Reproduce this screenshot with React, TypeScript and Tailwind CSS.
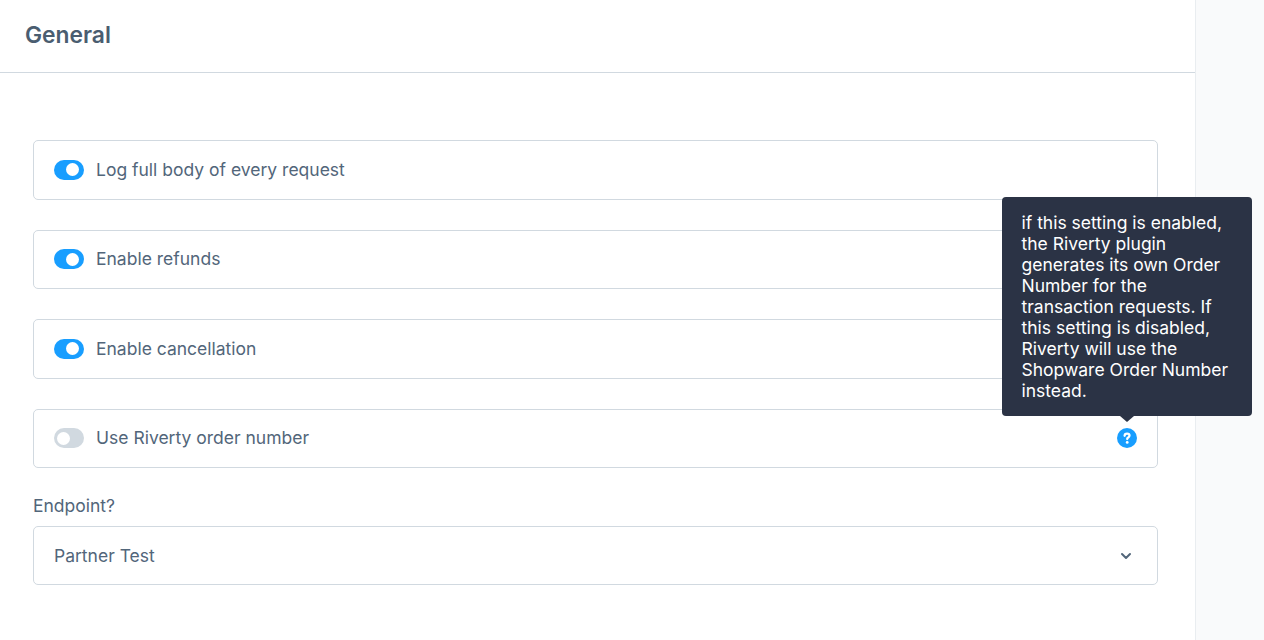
export default function App() {
  const Toggle = ({ on }: { on: boolean }) => (
    <span className={`flex h-5 w-[30px] shrink-0 items-center rounded-full ${on ? "justify-end bg-[#189eff] pr-[5px]" : "justify-start bg-[#d1d9e0] pl-[3px]"}`}>
      <span className="h-[13px] w-[13px] rounded-full bg-white" />
    </span>
  );
  const Row = ({ label, on, help }: { label: string; on: boolean; help?: boolean }) => (
    <div className="mb-[30px] flex h-[59.5px] items-center rounded-[5px] border border-[#d1d9e0] bg-white pl-5 pr-5">
      <Toggle on={on} />
      <span className="ml-3 text-[17.5px] text-[#52667a]">{label}</span>
      {help && (
        <div className="relative ml-auto h-5 w-5">
          <svg viewBox="0 0 20 20" className="h-5 w-5">
            <circle cx="10" cy="10" r="10" fill="#189eff" />
            <path d="M7.6 7.800c0-1.400 1-2.200 2.500-2.200s2.400 .8 2.400 1.900c0 1-.6 1.500-1.300 2-.7.4-1 .8-1 1.500" fill="none" stroke="#fff" strokeWidth="2.300" strokeLinecap="round" />
            <circle cx="10.200" cy="14.400" r="1.400" fill="#fff" />
          </svg>
          <div className="absolute bottom-[32px] right-[-115px] z-10 w-[250px] rounded-[4px] bg-[#2b3345] py-[15px] pl-[19.5px] pr-5 text-[17.5px] leading-[21px] text-white">
            if this setting is enabled, the Riverty plugin generates its own Order Number for the transaction requests. If this setting is disabled, Riverty will use the Shopware Order Number instead.
            <span className="absolute -bottom-[6px] left-1/2 h-0 w-0 -translate-x-1/2 border-x-[7px] border-t-[6px] border-x-transparent border-t-[#2b3345]" />
          </div>
        </div>
      )}
    </div>
  );
  return (
    <div className="flex h-[640px] overflow-hidden bg-[#f9fafb] font-['Inter',sans-serif]">
      <div className="h-full w-[1196px] border-r border-[#e9edf0] bg-white">
        <div className="flex h-[73px] items-center border-b border-[#d1d9e0] pb-[2px] pl-[25px]">
          <h2 className="text-[22.8px] font-semibold text-[#4a5d70]">General</h2>
        </div>
        <div className="pl-[33px] pr-[37px] pt-[67px]">
          <Row label="Log full body of every request" on />
          <Row label="Enable refunds" on />
          <Row label="Enable cancellation" on />
          <Row label="Use Riverty order number" on={false} help />
          <div className="mt-[-4px] mb-[8px] text-[17.5px] leading-[24px] text-[#52667a]">Endpoint?</div>
          <div className="flex h-[59px] items-center justify-between rounded-[5px] border border-[#d1d9e0] pl-5 pr-6 pt-[1px] text-[17.5px] text-[#52667a]">
            <span>Partner Test</span>
            <svg viewBox="0 0 12 8" className="mr-[1px] mb-[1px] h-2 w-3" fill="none" stroke="#52667a" strokeWidth="2" strokeLinecap="round" strokeLinejoin="round">
              <path d="M2 2l4 4 4-4" />
            </svg>
          </div>
        </div>
      </div>
    </div>
  );
}
